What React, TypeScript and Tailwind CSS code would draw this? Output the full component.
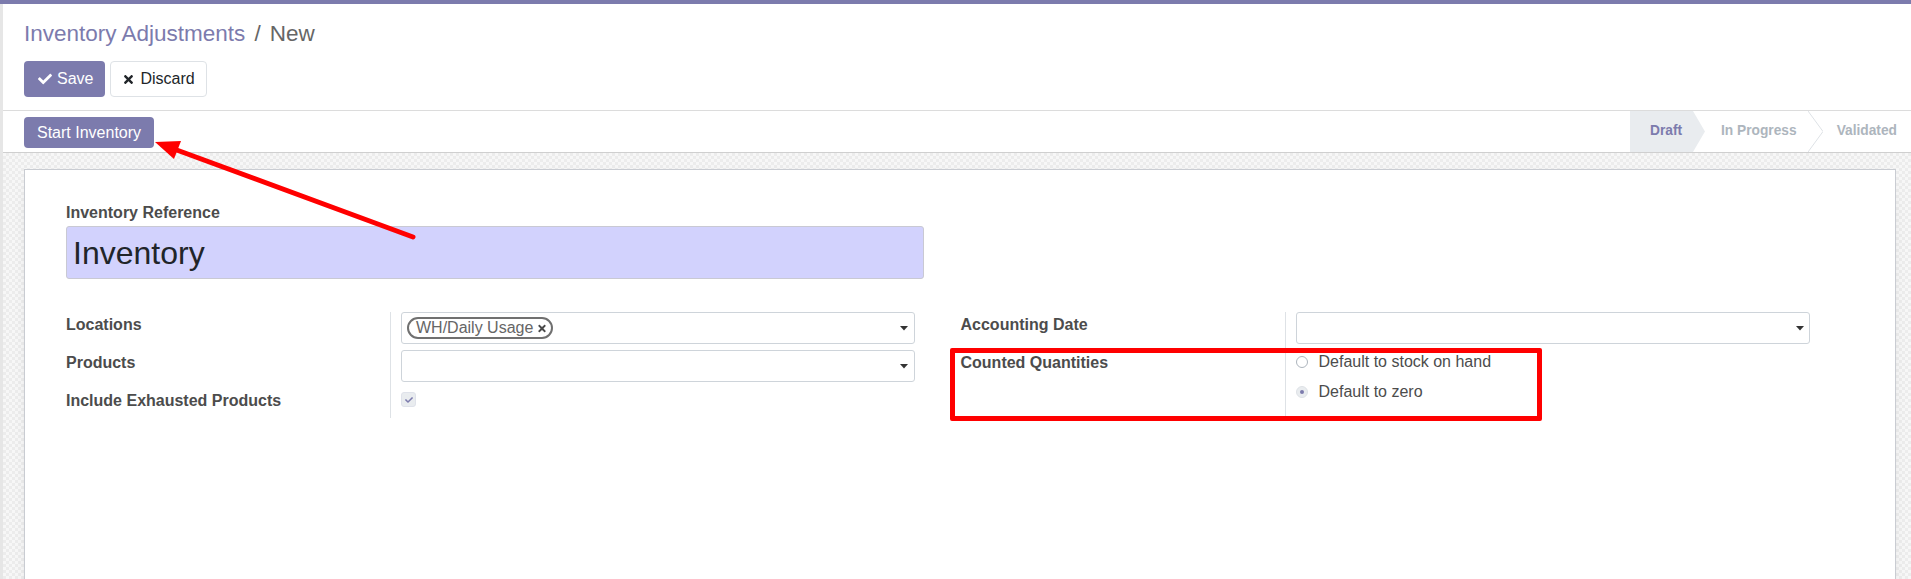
import React from "react";
import { FaCheck, FaTimes } from "react-icons/fa";

function Caret() {
  return (
    <svg width="8" height="5" viewBox="0 0 8 5" className="shrink-0">
      <path d="M0 0 L8 0 L4 4.5 Z" fill="#333" />
    </svg>
  );
}

function Radio({ checked, label }: { checked?: boolean; label: string }) {
  return (
    <div className="flex h-[24px] items-center">
      {checked ? (
        <span className="flex h-[12px] w-[12px] items-center justify-center rounded-full border border-[#dee2e6] bg-[#e9ecef]">
          <span className="h-[4px] w-[4px] rounded-full bg-[#7c7bad]" />
        </span>
      ) : (
        <span className="h-[12px] w-[12px] rounded-full border border-[#adb5bd] bg-white" />
      )}
      <span className="ml-[11px] text-[16px] text-[#4c4c4c]">{label}</span>
    </div>
  );
}

export default function App() {
  return (
    <div className="relative h-[579px] w-[1911px] overflow-hidden bg-white font-['Liberation_Sans',Arial,sans-serif] text-[#4c4c4c]">
      <div className="h-[4px] bg-[#7c7bad]" />
      <div className="flex h-[575px] flex-col border-l-[3px] border-[#e6e6e6]">
        {/* control panel */}
        <div className="border-b border-[#dcdcdc] pl-[21px] pt-[16px] pb-[13px]">
          <h1 className="flex text-[22.5px] leading-[27px]">
            <span className="text-[#7c7bad]">Inventory Adjustments</span>
            <span className="px-[9px] text-[#666]">/</span>
            <span className="text-[#666]">New</span>
          </h1>
          <div className="mt-[14px] flex gap-[5px]">
            <button
              type="button"
              className="flex h-[36px] items-center rounded-[4px] bg-[#7c7bad] pl-[14px] pr-[12px] text-[16px] text-white"
            >
              <FaCheck className="h-[14px] w-[14px]" />
              <span className="ml-[5px]">Save</span>
            </button>
            <button
              type="button"
              className="flex h-[36px] items-center rounded-[4px] border border-[#dee2e6] bg-white pl-[12px] pr-[11px] text-[16px] text-[#212529]"
            >
              <FaTimes className="h-[13px] w-[11px]" />
              <span className="ml-[6px]">Discard</span>
            </button>
          </div>
        </div>

        {/* status bar */}
        <div className="flex h-[42px] border-b border-[#cfcfcf] bg-white">
          <div className="pl-[21px] pt-[6px]">
            <button
              type="button"
              className="h-[31px] rounded-[4px] bg-[#7c7bad] px-[13px] text-[16px] text-white"
            >
              Start Inventory
            </button>
          </div>
          <div className="ml-auto flex h-full text-[13.75px] font-bold">
            <div className="flex h-full w-[75px] items-center bg-[#e9ecef] pl-[20px] text-[#7c7bad] [clip-path:polygon(0_0,calc(100%_-_12px)_0,100%_50%,calc(100%_-_12px)_100%,0_100%)]">
              Draft
            </div>
            <div className="flex h-full items-center pl-[16px] pr-[11px] text-[#adb5bd]">In Progress</div>
            <svg width="15" height="41" viewBox="0 0 15 41" className="shrink-0">
              <polyline points="0,0 15,20.5 0,41" fill="none" stroke="#dee2e6" strokeWidth="1" />
            </svg>
            <div className="flex h-full items-center pl-[14px] pr-[14px] text-[#adb5bd]">Validated</div>
          </div>
        </div>

        {/* sheet background */}
        <div className="flex-1 bg-[#f2f2f2] bg-[image:repeating-conic-gradient(#ececec_0_25%,#f7f7f7_0_50%)] bg-[length:6px_6px] pl-[21px] pr-[15px] pt-[16px]">
          <div className="h-[500px] border border-[#c9ccd2] bg-white pl-[41px] pr-[40px] pt-[33px] shadow-[0_5px_20px_-15px_rgba(0,0,0,0.4)]">
            <div className="text-[16px] font-bold leading-[20px]">Inventory Reference</div>
            <div className="mt-[3px] flex h-[53px] w-[858px] items-center rounded-[3px] border border-[#c9c9d3] bg-[#d2d2fd] pl-[6px] text-[32px] text-[#212529]">
              Inventory
            </div>

            <div className="mt-[33px] grid grid-cols-2">
              {/* left group */}
              <div className="grid grid-cols-[325px_535px] text-[16px]">
                <div className="h-[38px] border-r border-[#dee2e6] pt-[3px] font-bold leading-[20px]">Locations</div>
                <div className="h-[38px] pl-[10px] pr-[11px]">
                  <div className="flex h-[32px] items-center rounded-[3px] border border-[#ced4da] pl-[5px] pr-[6px]">
                    <span className="flex h-[22px] items-center rounded-full border-2 border-[#707070] pl-[7px] pr-[4px] text-[16px] leading-none text-[#666]">
                      WH/Daily Usage
                      <FaTimes className="ml-[4px] h-[11px] w-[10px] text-[#4a4a4a]" />
                    </span>
                    <span className="ml-auto">
                      <Caret />
                    </span>
                  </div>
                </div>
                <div className="h-[38px] border-r border-[#dee2e6] pt-[3px] font-bold leading-[20px]">Products</div>
                <div className="h-[38px] pl-[10px] pr-[11px]">
                  <div className="flex h-[32px] items-center justify-end rounded-[3px] border border-[#ced4da] pr-[6px]">
                    <Caret />
                  </div>
                </div>
                <div className="h-[30px] border-r border-[#dee2e6] pt-[3px] font-bold leading-[20px]">
                  Include Exhausted Products
                </div>
                <div className="h-[30px] pl-[10px] pt-[4px]">
                  <span className="flex h-[15px] w-[15px] items-center justify-center rounded-[3px] border border-[#dfe2ea] bg-[#e9ecef]">
                    <FaCheck className="h-[8px] w-[8px] text-[#7c7bad]" />
                  </span>
                </div>
              </div>

              {/* right group */}
              <div className="grid grid-cols-[325px_535px] text-[16px]">
                <div className="h-[38px] border-r border-[#dee2e6] pt-[3px] font-bold leading-[20px]">Accounting Date</div>
                <div className="h-[38px] pl-[10px] pr-[11px]">
                  <div className="flex h-[32px] items-center justify-end rounded-[3px] border border-[#ced4da] pr-[5px]">
                    <Caret />
                  </div>
                </div>
                <div className="h-[68px] border-r border-[#dee2e6] pt-[3px] font-bold leading-[20px]">Counted Quantities</div>
                <div className="flex h-[68px] flex-col gap-[6px] pl-[10px]">
                  <Radio label="Default to stock on hand" />
                  <Radio checked label="Default to zero" />
                </div>
              </div>
            </div>
          </div>
        </div>
      </div>

      {/* annotations */}
      <div className="pointer-events-none absolute left-[950px] top-[348px] h-[73px] w-[592px] rounded-[2px] border-[5px] border-[#ff0000]" />
      <svg className="pointer-events-none absolute left-0 top-0" width="1911" height="579" viewBox="0 0 1911 579">
        <line x1="413" y1="237" x2="174" y2="149" stroke="#ff0000" strokeWidth="5" strokeLinecap="round" />
        <polygon points="155,142 181,141 174,159" fill="#ff0000" />
      </svg>
    </div>
  );
}
